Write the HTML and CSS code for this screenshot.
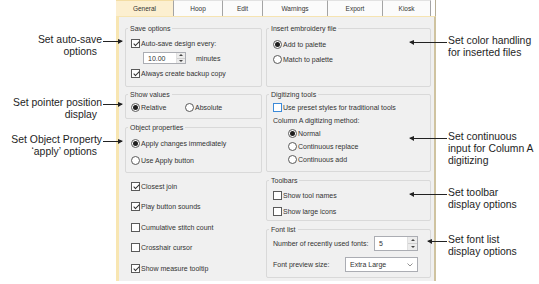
FILE: index.html
```html
<!DOCTYPE html>
<html lang="en">
<head>
  <meta charset="UTF-8">
  <title>Options - General</title>
  <link rel="stylesheet" href="styles.css">
</head>
<body>
  <div class="page">
    <aside class="notes notes-left">
      <div class="note note-autosave">
        <span class="note-head">Set auto-save<i class="pointer to-right"></i></span>
        <span class="note-tail">options</span>
      </div>
      <div class="note note-pointer">
        <span class="note-head">Set pointer position<i class="pointer to-right"></i></span>
        <span class="note-tail">display</span>
      </div>
      <div class="note note-apply">
        <span class="note-head">Set Object Property<i class="pointer to-right"></i></span>
        <span class="note-tail">&lsquo;apply&rsquo; options</span>
      </div>
    </aside>

    <div class="dialog">
      <div class="tabs">
        <div class="tab active tab-general">General</div>
        <div class="tab tab-hoop">Hoop</div>
        <div class="tab tab-edit">Edit</div>
        <div class="tab tab-warnings">Warnings</div>
        <div class="tab tab-export">Export</div>
        <div class="tab tab-kiosk">Kiosk</div>
      </div>

      <div class="panel">
        <div class="col col-left">
          <section class="group group-save">
            <h3 class="group-title">Save options</h3>
            <div class="opt"><span class="cb on"></span>Auto-save design every:</div>
            <div class="spin-row">
              <span class="spin spin-minutes">
                <span class="spin-val">10.00</span>
                <span class="spin-btns"><i class="up"></i><i class="down"></i></span>
              </span>
              <span class="unit">minutes</span>
            </div>
            <div class="opt"><span class="cb on"></span>Always create backup copy</div>
          </section>

          <section class="group group-values">
            <h3 class="group-title">Show values</h3>
            <div class="opt">
              <span class="opt-pair"><span class="rb on"></span>Relative</span>
              <span class="rb"></span>Absolute
            </div>
          </section>

          <section class="group group-object">
            <h3 class="group-title">Object properties</h3>
            <div class="opt"><span class="rb on"></span>Apply changes immediately</div>
            <div class="opt"><span class="rb"></span>Use Apply button</div>
          </section>

          <div class="checklist">
            <div class="opt"><span class="cb on"></span>Closest join</div>
            <div class="opt"><span class="cb on"></span>Play button sounds</div>
            <div class="opt"><span class="cb"></span>Cumulative stitch count</div>
            <div class="opt"><span class="cb"></span>Crosshair cursor</div>
            <div class="opt"><span class="cb on"></span>Show measure tooltip</div>
          </div>
        </div>

        <div class="col col-right">
          <section class="group group-insert">
            <h3 class="group-title">Insert embroidery file</h3>
            <div class="opt"><span class="rb on"></span>Add to palette</div>
            <div class="opt"><span class="rb"></span>Match to palette</div>
          </section>

          <section class="group group-digitize">
            <h3 class="group-title">Digitizing tools</h3>
            <div class="opt"><span class="cb focus"></span>Use preset styles for traditional tools</div>
            <div class="opt">Column A digitizing method:</div>
            <div class="opt indent"><span class="rb on"></span>Normal</div>
            <div class="opt indent"><span class="rb"></span>Continuous replace</div>
            <div class="opt indent"><span class="rb"></span>Continuous add</div>
          </section>

          <section class="group group-toolbars">
            <h3 class="group-title">Toolbars</h3>
            <div class="opt"><span class="cb"></span>Show tool names</div>
            <div class="opt"><span class="cb"></span>Show large icons</div>
          </section>

          <section class="group group-fonts">
            <h3 class="group-title">Font list</h3>
            <div class="field-row">
              <span>Number of recently used fonts:</span>
              <span class="spin spin-fonts">
                <span class="spin-val">5</span>
                <span class="spin-btns"><i class="up"></i><i class="down"></i></span>
              </span>
            </div>
            <div class="field-row">
              <span>Font preview size:</span>
              <span class="select">
                <span>Extra Large</span>
                <svg width="6" height="4" viewBox="0 0 6 4"><polyline points="0.5,0.5 3,3 5.5,0.5" fill="none" stroke="#777" stroke-width="0.8"/></svg>
              </span>
            </div>
          </section>
        </div>
      </div>
    </div>

    <aside class="notes notes-right">
      <div class="note note-color">
        <span class="note-head">Set color handling<i class="pointer to-left"></i></span>
        <span class="note-tail">for inserted files</span>
      </div>
      <div class="note note-column">
        <span class="note-head">Set continuous<i class="pointer to-left"></i></span>
        <span class="note-tail">input for Column A</span>
        <span class="note-tail">digitizing</span>
      </div>
      <div class="note note-toolbar">
        <span class="note-head">Set toolbar<i class="pointer to-left"></i></span>
        <span class="note-tail">display options</span>
      </div>
      <div class="note note-fontlist">
        <span class="note-head">Set font list<i class="pointer to-left short"></i></span>
        <span class="note-tail">display options</span>
      </div>
    </aside>
  </div>
</body>
</html>
```

FILE: styles.css
```css
body {
  margin: 0;
  background: #fff;
  font-family: "Liberation Sans", Arial, sans-serif;
  color: #222;
  overflow: hidden;
}

.page {
  display: flex;
  width: 539px;
  height: 284px;
}

/* callouts */

.notes {
  font-size: 10.4px;
  line-height: 12px;
  color: #1e1e1e;
}

.notes-left {
  width: 116px;
  flex: none;
  text-align: right;
}

.notes-right {
  flex: 1;
  position: relative;
  z-index: 2;
}

.note-head,
.note-tail {
  display: block;
  white-space: nowrap;
}

.note-head {
  position: relative;
}

.notes-left .note-head {
  padding-right: 14px;
}

.notes-left .note-tail {
  padding-right: 19px;
}

.notes-right .note-head,
.notes-right .note-tail {
  padding-left: 12px;
}

.note-autosave { margin-top: 34px; }
.note-pointer { margin-top: 39px; }
.note-apply { margin-top: 13px; }

.note-color { margin-top: 35px; }
.note-column { margin-top: 72px; }
.note-toolbar { margin-top: 20px; }
.note-fontlist { margin-top: 23px; }

.pointer {
  position: absolute;
  top: 7px;
  height: 1px;
  background: #222;
  z-index: 3;
}

.pointer::after {
  content: '';
  position: absolute;
  top: -2px;
  border-top: 2px solid transparent;
  border-bottom: 3px solid transparent;
}

.to-right {
  left: 103px;
  width: 19px;
}

.to-right::after {
  right: -1px;
  border-left: 5px solid #222;
}

.to-left {
  left: -26px;
  width: 37px;
}

.to-left.short {
  left: -8px;
  width: 19px;
}

.to-left::after {
  left: -1px;
  border-right: 5px solid #222;
}

/* dialog */

.dialog {
  width: 320px;
  flex: none;
  font-size: 7px;
  color: #333;
  position: relative;
  z-index: 1;
}

.tabs {
  display: flex;
  height: 16px;
  font-size: 6.5px;
  box-shadow: inset -1px 0 0 #b5ad96;
}

.tab {
  box-sizing: border-box;
  height: 16px;
  line-height: 16px;
  text-align: center;
  background: #fbfbfb;
  border-right: 1px solid #a4a4a4;
  border-top: 1px solid #e2e2e2;
}

.tab.active {
  background: #fcefd0;
  border-top-color: #f3dda4;
}

.tab-general { width: 58px; }
.tab-hoop { width: 49px; }
.tab-edit { width: 40px; }
.tab-warnings { width: 65px; }
.tab-export { width: 55px; }
.tab-kiosk { width: 48px; }

.panel {
  box-sizing: border-box;
  height: 265px;
  display: flex;
  gap: 4px;
  padding: 11px 3px 0 6px;
  background: #f0f0f0;
  border-top: 1px solid #f6e4b2;
  border-left: 3px solid #f8e6b2;
  border-right: 2px solid #cfc3a0;
}

.col-left { width: 137px; }
.col-right { width: 165px; }

.group {
  box-sizing: border-box;
  display: flex;
  flex-direction: column;
  border: 1px solid #d9d9d9;
  border-radius: 2px;
  padding: 0 5px;
}

.col-right .group {
  padding-left: 6px;
}

.group + .group {
  margin-top: 7px;
}

.group-title {
  margin: -5px 0 0 -3px;
  padding: 0 2px;
  width: fit-content;
  height: 9px;
  line-height: 9px;
  font-size: 7px;
  font-weight: normal;
  background: #f0f0f0;
}

.col-right .group-title {
  margin-left: -4px;
}

.group-save { height: 59px; gap: 3px; }
.group-save .group-title { margin-bottom: 1px; }

.group-values { height: 25px; gap: 3px; }
.group-values .group-title { margin-bottom: -1px; }

.group-object { height: 46px; gap: 5px; margin-top: 8px !important; }

.group-insert { height: 59px; gap: 3px; }
.group-insert .group-title { margin-bottom: 2px; }

.group-digitize { height: 78px; }
.group-digitize .group-title { margin-bottom: 2px; }
.group-digitize .opt { height: 13px; }

.group-toolbars { height: 41px; gap: 4px; margin-top: 8px !important; }

.group-fonts { height: 49px; gap: 6px; padding-right: 12px; margin-top: 8px !important; }
.group-fonts .group-title { margin-bottom: -4px; }

.opt {
  display: flex;
  align-items: center;
  height: 12px;
  white-space: nowrap;
}

.opt.indent {
  padding-left: 15px;
}

.opt-pair {
  display: flex;
  align-items: center;
  width: 54px;
}

.checklist {
  display: flex;
  flex-direction: column;
  gap: 8.5px;
  margin-top: 7px;
  padding-left: 6px;
}

/* check boxes and radio buttons */

.cb,
.rb {
  position: relative;
  flex: none;
  box-sizing: border-box;
  width: 9px;
  height: 9px;
  margin-right: 1px;
  border: 1px solid #5a5a5a;
  background: #fff;
}

.cb.focus {
  border-color: #3c8ad8;
}

.cb.on::after {
  content: '';
  position: absolute;
  left: 2.5px;
  top: 0;
  width: 2px;
  height: 5px;
  border: solid #333;
  border-width: 0 1px 1px 0;
  transform: rotate(45deg);
}

.rb {
  border-radius: 50%;
}

.rb.on::after {
  content: '';
  position: absolute;
  inset: 1px;
  border-radius: 50%;
  background: #1e1e1e;
}

/* spin boxes and drop-down */

.spin-row {
  display: flex;
  align-items: center;
  height: 12px;
  padding-left: 12px;
}

.spin {
  box-sizing: border-box;
  display: flex;
  background: #fff;
  border: 1px solid #abadb3;
}

.spin-minutes {
  width: 43px;
  height: 12px;
}

.spin-fonts {
  width: 44px;
  height: 15px;
  margin-left: auto;
}

.spin-val {
  flex: 1;
  padding-left: 4px;
  display: flex;
  align-items: center;
}

.spin-btns {
  width: 8px;
  display: flex;
  flex-direction: column;
  border-left: 1px solid #e0e0e0;
}

.spin-fonts .spin-btns {
  width: 9px;
}

.spin-btns i {
  flex: 1;
  display: flex;
  align-items: center;
  justify-content: center;
  background: #ececec;
}

.spin-btns i + i {
  border-top: 1px solid #d0d0d0;
}

.spin-btns .up::before,
.spin-btns .down::before {
  content: '';
  border-left: 2px solid transparent;
  border-right: 2px solid transparent;
}

.spin-btns .up::before {
  border-bottom: 2px solid #444;
}

.spin-btns .down::before {
  border-top: 2px solid #444;
}

.unit {
  margin-left: 10px;
}

.field-row {
  display: flex;
  align-items: center;
  height: 15px;
  white-space: nowrap;
}

.select {
  box-sizing: border-box;
  display: flex;
  align-items: center;
  justify-content: space-between;
  width: 73px;
  height: 15px;
  margin-left: auto;
  padding: 0 4px;
  background: #fff;
  border: 1px solid #abadb3;
}
```
